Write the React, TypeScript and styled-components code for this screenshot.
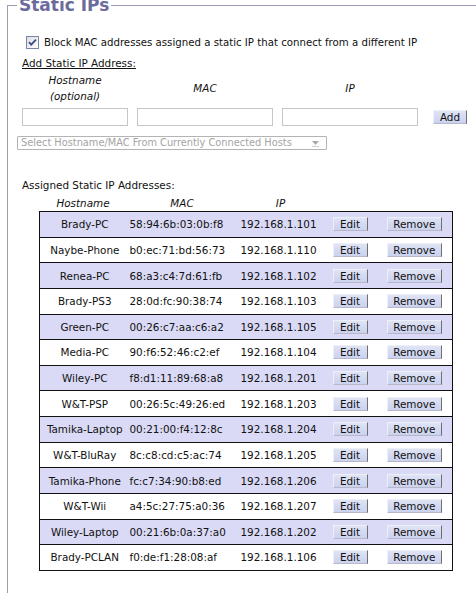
import React from 'react'
import styled, { createGlobalStyle } from 'styled-components'

const GlobalStyle = createGlobalStyle`
  html, body {
    margin: 0;
    padding: 0;
    background: #ffffff;
    overflow: hidden;
  }
  body {
    font-family: 'DejaVu Sans', Verdana, sans-serif;
    font-size: 10.4px;
    color: #111;
  }
`

const Page = styled.div`
  width: 476px;
  height: 593px;
  overflow: hidden;
`

const Fieldset = styled.fieldset`
  margin: -5px 0 0 7px;
  padding: 0 0 60px 0;
  width: 520px;
  border: none;
  border-top: 1px solid #9c9cb8;
  border-left: 1px solid #a0a0a0;
  min-inline-size: 0;
`

const Legend = styled.legend`
  margin-left: 9px;
  padding: 0 2px;
  font-size: 17px;
  line-height: 20px;
  font-weight: bold;
  color: #6b6b9c;
`

const CheckRow = styled.label`
  display: flex;
  align-items: center;
  gap: 5px;
  margin: 21px 0 0 18px;
  height: 13px;
  line-height: 13px;
  font-size: 10.2px;
`

const SectionTitle = styled.div<{ $underline?: boolean }>`
  line-height: 14px;
  margin-left: 14px;
  text-decoration: ${(p) => (p.$underline ? 'underline' : 'none')};
`

const AddTitle = styled(SectionTitle)`
  margin-top: 7px;
`

const AddGrid = styled.div`
  display: grid;
  grid-template-columns: 106px 136px 136px 40px;
  column-gap: 9px;
  margin: 2px 0 0 14px;
`

const FieldLabel = styled.div`
  height: 32px;
  display: flex;
  align-items: center;
  justify-content: center;
  text-align: center;
  font-style: italic;
  line-height: 16px;
  margin-bottom: 4px;
`

const TextBox = styled.input`
  box-sizing: border-box;
  width: 100%;
  height: 18px;
  border: 1px solid #c6c6c6;
  padding: 0 2px;
  font: inherit;
  background: #fff;
`

const Btn = styled.button<{ $w: number }>`
  box-sizing: border-box;
  width: ${(p) => p.$w}px;
  height: 14px;
  padding: 0;
  font: inherit;
  line-height: 12px;
  color: #111;
  background: linear-gradient(#dfe3f5, #cbd2ee);
  border: 1px solid;
  border-color: #eef0f8 #6f6f6f #b8b8c8 #eef0f8;
`

const AddCell = styled.div`
  align-self: end;
  display: flex;
  justify-content: flex-end;
  align-items: center;
  height: 18px;
`

const SelectBox = styled.div`
  box-sizing: border-box;
  width: 310px;
  height: 14px;
  margin: 10px 0 0 9px;
  border: 1px solid #b4b4b4;
  border-radius: 1px;
  color: #a4a4a4;
  display: flex;
  align-items: center;
  justify-content: space-between;
  padding: 0 6px 0 3px;
  line-height: 12px;
  font-size: 9.8px;
  white-space: nowrap;
  overflow: hidden;
`

const Assigned = styled(SectionTitle)`
  margin-top: 28px;
`

const HostTable = styled.table`
  margin: 3px 0 0 31px;
  border-collapse: collapse;
  table-layout: fixed;
  width: 413px;
`

const HeadCell = styled.th`
  height: 16px;
  padding: 0;
  font-weight: normal;
  font-style: italic;
  text-align: center;
`

const Row = styled.tr<{ $shade: boolean }>`
  background: ${(p) => (p.$shade ? '#dadaf6' : '#ffffff')};
  border: 1px solid #111;
`

const Cell = styled.td<{ $align?: string }>`
  height: 24.64px;
  padding: 0 0 0 3px;
  text-align: ${(p) => p.$align ?? 'left'};
  white-space: nowrap;
  overflow: hidden;
`

const hosts: [string, string, string][] = [
  ['Brady-PC', '58:94:6b:03:0b:f8', '192.168.1.101'],
  ['Naybe-Phone', 'b0:ec:71:bd:56:73', '192.168.1.110'],
  ['Renea-PC', '68:a3:c4:7d:61:fb', '192.168.1.102'],
  ['Brady-PS3', '28:0d:fc:90:38:74', '192.168.1.103'],
  ['Green-PC', '00:26:c7:aa:c6:a2', '192.168.1.105'],
  ['Media-PC', '90:f6:52:46:c2:ef', '192.168.1.104'],
  ['Wiley-PC', 'f8:d1:11:89:68:a8', '192.168.1.201'],
  ['W&T-PSP', '00:26:5c:49:26:ed', '192.168.1.203'],
  ['Tamika-Laptop', '00:21:00:f4:12:8c', '192.168.1.204'],
  ['W&T-BluRay', '8c:c8:cd:c5:ac:74', '192.168.1.205'],
  ['Tamika-Phone', 'fc:c7:34:90:b8:ed', '192.168.1.206'],
  ['W&T-Wii', 'a4:5c:27:75:a0:36', '192.168.1.207'],
  ['Wiley-Laptop', '00:21:6b:0a:37:a0', '192.168.1.202'],
  ['Brady-PCLAN', 'f0:de:f1:28:08:af', '192.168.1.106'],
]

function CheckIcon() {
  return (
    <svg width="13" height="13" viewBox="0 0 13 13">
      <defs>
        <linearGradient id="cbg" x1="0" y1="0" x2="1" y2="1">
          <stop offset="0" stopColor="#dcdce4" />
          <stop offset="1" stopColor="#ffffff" />
        </linearGradient>
      </defs>
      <rect x="0.5" y="0.5" width="12" height="12" fill="url(#cbg)" stroke="#7a88a8" />
      <path d="M3 6.2 L5.2 8.6 L10 3.6" fill="none" stroke="#3d4d80" strokeWidth="1.8" />
    </svg>
  )
}

function DropArrow() {
  return (
    <svg width="9" height="8" viewBox="0 0 9 8">
      <path d="M1 2 L8 2 L4.5 6 Z" fill="#a8a8a8" />
      <path d="M1 7.5 H8" stroke="#d0d0d0" />
    </svg>
  )
}

export default function App() {
  return (
    <Page>
      <GlobalStyle />
      <Fieldset>
        <Legend>Static IPs</Legend>

        <CheckRow>
          <CheckIcon />
          <span>Block MAC addresses assigned a static IP that connect from a different IP</span>
        </CheckRow>

        <AddTitle $underline>Add Static IP Address:</AddTitle>

        <AddGrid>
          <div>
            <FieldLabel>
              Hostname
              <br />
              (optional)
            </FieldLabel>
            <TextBox />
          </div>
          <div>
            <FieldLabel>MAC</FieldLabel>
            <TextBox />
          </div>
          <div>
            <FieldLabel>IP</FieldLabel>
            <TextBox />
          </div>
          <AddCell>
            <Btn $w={34}>Add</Btn>
          </AddCell>
        </AddGrid>

        <SelectBox>
          <span>Select Hostname/MAC From Currently Connected Hosts</span>
          <DropArrow />
        </SelectBox>

        <Assigned>Assigned Static IP Addresses:</Assigned>

        <HostTable>
          <colgroup>
            <col style={{ width: 87 }} />
            <col style={{ width: 111 }} />
            <col style={{ width: 86 }} />
            <col style={{ width: 50 }} />
            <col style={{ width: 79 }} />
          </colgroup>
          <thead>
            <tr>
              <HeadCell>Hostname</HeadCell>
              <HeadCell>MAC</HeadCell>
              <HeadCell>IP</HeadCell>
              <HeadCell />
              <HeadCell />
            </tr>
          </thead>
          <tbody>
            {hosts.map(([name, mac, ip], i) => (
              <Row key={name} $shade={i % 2 === 0}>
                <Cell $align="center">{name}</Cell>
                <Cell>{mac}</Cell>
                <Cell>{ip}</Cell>
                <Cell $align="center">
                  <Btn $w={35}>Edit</Btn>
                </Cell>
                <Cell $align="center">
                  <Btn $w={55}>Remove</Btn>
                </Cell>
              </Row>
            ))}
          </tbody>
        </HostTable>
      </Fieldset>
    </Page>
  )
}
